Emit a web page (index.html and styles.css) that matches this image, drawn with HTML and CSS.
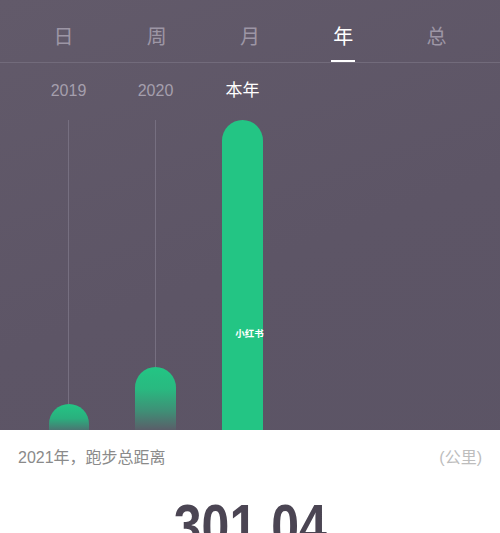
FILE: index.html
```html
<!DOCTYPE html>
<html lang="zh-CN">
<head>
<meta charset="utf-8">
<link rel="stylesheet" href="styles.css">
</head>
<body>
<div class="screen">
  <nav class="tabs">
    <div class="tab"><span class="tab-text">日</span></div>
    <div class="tab"><span class="tab-text">周</span></div>
    <div class="tab"><span class="tab-text">月</span></div>
    <div class="tab active"><span class="tab-text">年</span><span class="underline"></span></div>
    <div class="tab"><span class="tab-text">总</span></div>
  </nav>
  <section class="chart">
    <div class="col">
      <div class="label">2019</div>
      <div class="stem"></div>
      <div class="bar fade bar-2019"></div>
    </div>
    <div class="col">
      <div class="label">2020</div>
      <div class="stem"></div>
      <div class="bar fade bar-2020"></div>
    </div>
    <div class="col current">
      <div class="label">本年</div>
      <div class="stem"></div>
      <div class="bar solid bar-now"><span class="mark">小红书</span></div>
    </div>
  </section>
  <section class="panel">
    <span class="pointer"></span>
    <div class="panel-row">
      <span class="caption">2021年，跑步总距离</span>
      <span class="unit">(公里)</span>
    </div>
    <div class="value"><span class="value-text">301.04</span></div>
  </section>
</div>
</body>
</html>
```
FILE: styles.css
```css
html, body {
  margin: 0;
  padding: 0;
}
body {
  width: 500px;
  height: 533px;
  overflow: hidden;
  font-family: "Liberation Sans", "Noto Sans CJK SC", sans-serif;
}
.screen {
  width: 500px;
  height: 533px;
  display: flex;
  flex-direction: column;
  background: linear-gradient(160deg, #625a6a 0%, #5d5566 50%, #5b5465 100%);
}
.tabs {
  display: grid;
  grid-template-columns: repeat(5, 1fr);
  padding: 0 17px;
  height: 62px;
  border-bottom: 1px solid #726b7b;
  flex: none;
}
.tab {
  display: flex;
  flex-direction: column;
  align-items: center;
  padding-top: 27px;
}
.tab-text {
  font-size: 20px;
  line-height: 20px;
  color: #9d96a5;
}
.tab.active .tab-text {
  color: #ffffff;
}
.underline {
  width: 24px;
  height: 2px;
  margin-top: 13px;
  background: #ffffff;
}
.chart {
  flex: none;
  height: 367px;
  display: flex;
  padding: 18px 0 0 25px;
  box-sizing: border-box;
}
.col {
  width: 87px;
  display: flex;
  flex-direction: column;
  align-items: center;
}
.label {
  font-size: 16px;
  line-height: 20px;
  height: 20px;
  color: #a59fad;
  margin-bottom: 19px;
}
.col.current .label {
  font-size: 17px;
  color: #ffffff;
}
.stem {
  flex: 1;
  width: 1px;
  background: #766f80;
}
.col.current .stem {
  background: transparent;
}
.bar {
  width: 41px;
  border-radius: 20.5px 20.5px 0 0;
  flex: none;
}
.fade {
  background: linear-gradient(180deg, #23c584 0%, #29b980 35%, #3f8f76 70%, #5a5e69 100%);
}
.bar-2019 {
  width: 40px;
  height: 26px;
  border-radius: 20px 20px 0 0;
  background: linear-gradient(180deg, #23c584 0%, #2ab07e 55%, #4a7672 100%);
}
.bar-2020 {
  height: 63px;
}
.solid {
  background: #23c584;
}
.bar-now {
  height: 311px;
  display: flex;
  flex-direction: column;
  align-items: center;
}
.mark {
  margin-top: 209px;
  margin-left: 14px;
  white-space: nowrap;
  font-size: 9.5px;
  line-height: 10px;
  font-weight: bold;
  color: #ffffff;
}
.panel {
  flex: 1;
  position: relative;
  background: #ffffff;
  padding: 17px 18px 0;
  overflow: hidden;
}
.pointer {
  position: absolute;
  top: -6px;
  left: 244px;
  width: 0;
  height: 0;
  border-left: 6px solid transparent;
  border-right: 6px solid transparent;
  border-bottom: 6px solid #ffffff;
}
.panel-row {
  display: flex;
  justify-content: space-between;
  align-items: center;
  height: 22px;
  font-size: 16px;
  line-height: 22px;
}
.caption {
  color: #8a8a8a;
}
.unit {
  color: #bdbdbd;
}
.value {
  margin-top: 27px;
  text-align: center;
  font-family: "Liberation Sans", sans-serif;
  font-weight: bold;
  font-size: 61px;
  line-height: 61px;
  color: #4b4553;
}
.value-text {
  display: inline-block;
  transform: scaleX(0.82);
}
```
